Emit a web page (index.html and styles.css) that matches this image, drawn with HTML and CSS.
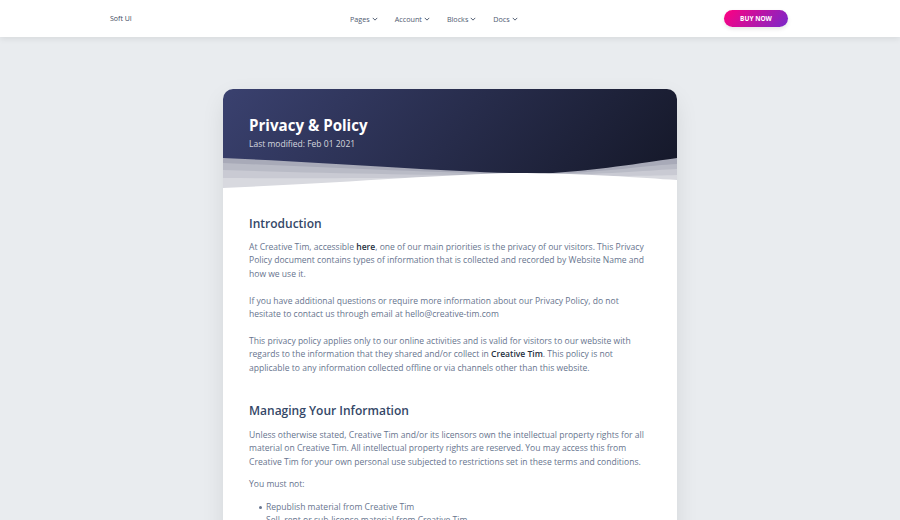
FILE: index.html
```html
<!DOCTYPE html>
<html lang="en">
<head>
<meta charset="utf-8">
<title>Privacy &amp; Policy</title>
<link rel="stylesheet" href="styles.css">
</head>
<body>
<header class="navbar">
  <div class="nav-inner">
    <a class="brand" href="#">Soft UI</a>
    <nav class="menu">
      <a class="menu-item" href="#">Pages <svg class="chev" viewBox="0 0 8 5"><path d="M1 1l3 3 3-3"/></svg></a>
      <a class="menu-item" href="#">Account <svg class="chev" viewBox="0 0 8 5"><path d="M1 1l3 3 3-3"/></svg></a>
      <a class="menu-item" href="#">Blocks <svg class="chev" viewBox="0 0 8 5"><path d="M1 1l3 3 3-3"/></svg></a>
      <a class="menu-item" href="#">Docs <svg class="chev" viewBox="0 0 8 5"><path d="M1 1l3 3 3-3"/></svg></a>
    </nav>
    <a class="buy" href="#">Buy Now</a>
  </div>
</header>
<main class="page">
  <article class="card">
    <div class="card-head">
      <h1 class="title">Privacy &amp; Policy</h1>
      <p class="subtitle">Last modified: Feb 01 2021</p>
      <svg class="waves" viewBox="0 0 454 41" preserveAspectRatio="none">
        <path d="M0 9 C 120 14, 280 27, 330 24 C 380 21, 430 12, 454 9 L454 41 L0 41 Z" fill="#a8aab8"/>
        <path d="M0 14 C 120 19, 280 27, 330 25 C 380 23, 430 16, 454 15 L454 41 L0 41 Z" fill="#b9bbc6"/>
        <path d="M0 21 C 120 25, 260 27, 330 26 C 390 25, 430 21, 454 20 L454 41 L0 41 Z" fill="#c9cad3"/>
        <path d="M0 29 C 120 30, 250 28, 330 27 C 390 27, 430 27, 454 26 L454 41 L0 41 Z" fill="#d8d9df"/>
        <path d="M0 39 C 120 34, 230 25, 290 24 C 360 24, 420 29, 454 31 L454 41 L0 41 Z" fill="#ffffff"/>
      </svg>
    </div>
    <div class="card-body">
      <h2 class="section-title">Introduction</h2>
      <p class="text">At Creative Tim, accessible <a class="strong" href="#">here</a>, one of our main priorities is the privacy of our visitors. This Privacy Policy document contains types of information that is collected and recorded by Website Name and how we use it.</p>
      <p class="text">If you have additional questions or require more information about our Privacy Policy, do not hesitate to contact us through email at hello@creative-tim.com</p>
      <p class="text">This privacy policy applies only to our online activities and is valid for visitors to our website with regards to the information that they shared and/or collect in <a class="strong" href="#">Creative Tim</a>. This policy is not applicable to any information collected offline or via channels other than this website.</p>
      <h2 class="section-title second">Managing Your Information</h2>
      <p class="text tight first">Unless otherwise stated, Creative Tim and/or its licensors own the intellectual property rights for all material on Creative Tim. All intellectual property rights are reserved. You may access this from Creative Tim for your own personal use subjected to restrictions set in these terms and conditions.</p>
      <p class="text tight">You must not:</p>
      <ul class="list">
        <li>Republish material from Creative Tim</li>
        <li>Sell, rent or sub-license material from Creative Tim</li>
        <li>Reproduce, duplicate or copy material from Creative Tim</li>
      </ul>
    </div>
  </article>
</main>
</body>
</html>
```
FILE: styles.css
```css
* { box-sizing: border-box; }
html, body { margin: 0; padding: 0; }
body {
  background: #e9ecef;
  font-family: "Open Sans", "Noto Sans", sans-serif;
  color: #67748e;
  overflow: hidden;
  height: 520px;
}
a { text-decoration: none; color: inherit; }

.navbar {
  background: #fff;
  height: 37px;
  box-shadow: 0 2px 6px rgba(0,0,0,0.08);
  position: relative;
  z-index: 2;
}
.nav-inner {
  width: 680px;
  margin: 0 auto;
  height: 100%;
  display: flex;
  align-items: center;
}
.brand {
  font-size: 7px;
  color: #3e4a60;
  font-weight: 400;
}
.menu {
  margin: 0 auto;
  display: flex;
  gap: 17px;
  padding-left: 12px;
}
.menu-item {
  font-size: 7.2px;
  color: #4f5a70;
  display: flex;
  align-items: center;
  gap: 2px;
}
.chev {
  width: 6px;
  height: 4px;
  fill: none;
  stroke: #4f5a70;
  stroke-width: 1.3;
}
.buy {
  width: 64px;
  height: 17px;
  border-radius: 9px;
  background: linear-gradient(310deg, #7928ca 0%, #ff0080 100%);
  color: #fff;
  font-size: 6.5px;
  font-weight: 700;
  text-transform: uppercase;
  display: flex;
  align-items: center;
  justify-content: center;
  box-shadow: 0 2px 4px rgba(0,0,0,0.1);
  margin-right: 2px;
}

.page {
  display: flex;
  justify-content: center;
  padding-top: 52px;
}
.card {
  width: 454px;
  background: #fff;
  border-radius: 10px;
  overflow: hidden;
  box-shadow: 0 8px 26px -4px rgba(20,20,20,0.12);
}
.card-head {
  position: relative;
  height: 101px;
  background: linear-gradient(310deg, #141727 0%, #3a416f 100%);
  padding: 25px 26px 0;
}
.title {
  margin: 0;
  color: #fff;
  font-size: 15.1px;
  font-weight: 700;
  line-height: 22px;
}
.subtitle {
  margin: 1px 0 0;
  color: rgba(255,255,255,0.8);
  font-size: 8.5px;
  line-height: 13px;
}
.waves {
  position: absolute;
  left: 0;
  bottom: 0;
  width: 100%;
  height: 41px;
  display: block;
}
.card-body {
  padding: 24px 28px 20px 26px;
}
.section-title {
  margin: 0;
  color: #344767;
  font-weight: 600;
  font-size: 12px;
  line-height: 20px;
}
.section-title.second { margin-top: 26px; }
.text {
  margin: 7px 0 13.4px;
  font-size: 8.55px;
  line-height: 13.4px;
}
.text.tight { margin: 8px 0 9px; }
.text.tight.first { margin-top: 8px; }
.strong { color: #252f40; font-weight: 600; }
.list {
  margin: 8px 0 0;
  padding: 0 0 0 17px;
  list-style: none;
  font-size: 8.55px;
  line-height: 13.4px;
}
.list li { position: relative; }
.list li::before {
  content: "";
  position: absolute;
  left: -7px;
  top: 5.5px;
  width: 3px;
  height: 3px;
  border-radius: 50%;
  background: #67748e;
}
```
